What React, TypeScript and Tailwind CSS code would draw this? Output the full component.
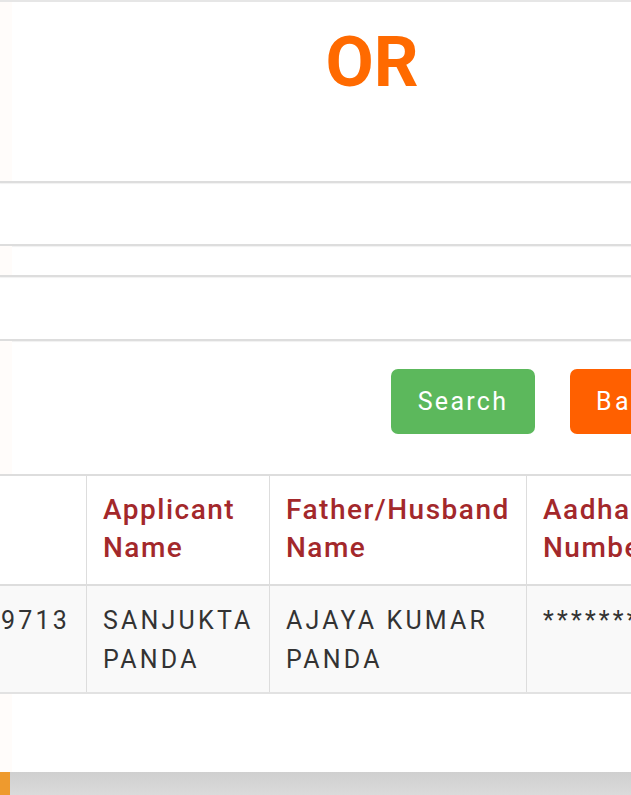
import React from 'react';

const font = { fontFamily: 'Roboto, "Noto Sans", Arial, sans-serif' };

function Divider() {
  return <div className="h-[2px] bg-[#dddddd] shadow-[0_1px_1px_rgba(0,0,0,0.06)]" />;
}

export default function App() {
  return (
    <div className="w-[631px] h-[795px] overflow-hidden bg-white relative" style={font}>
      <div className="w-[744px]">
        <div className="h-[2px] bg-[#e6e6e6]" />
        {/* OR panel */}
        <div className="h-[179px] flex">
          <div className="w-3 bg-[#fffcfa]" />
          <div className="flex-1 flex justify-center pt-[20px] pr-[12px]">
            <span className="text-[70px] leading-[80px] font-bold text-[#ff6a00]">OR</span>
          </div>
        </div>
        <Divider />
        <div className="h-[61px]" />
        <Divider />
        <div className="h-[29px] flex">
          <div className="w-3 bg-[#fffcfa]" />
        </div>
        <Divider />
        <div className="h-[62px]" />
        <Divider />
        {/* buttons */}
        <div className="h-[133px] flex">
          <div className="w-3 bg-[#fffcfa]" />
          <div className="flex-1 flex items-start pt-[28px] pl-[379px] gap-[35px]">
            <button className="w-[144px] h-[65px] rounded-[7px] bg-[#5cb85c] text-white text-[25px] tracking-[2.3px]">
              Search
            </button>
            <button className="w-[120px] h-[65px] rounded-[7px] bg-[#ff6000] text-white text-[25px] tracking-[3.5px] text-left pl-[26px]">
              Back
            </button>
          </div>
        </div>
        {/* table */}
        <div className="border-t-2 border-[#dddddd]">
          <div className="flex h-[108px] bg-white text-[#a3282b] text-[28px] leading-[38px] font-medium tracking-[1.5px]">
            <div className="w-[87px] border-r border-[#dddddd]" />
            <div className="w-[183px] border-r border-[#dddddd] pl-[16px] pt-[15px]">
              Applicant<br />Name
            </div>
            <div className="w-[257px] border-r border-[#dddddd] pl-[16px] pt-[15px] whitespace-nowrap">
              Father/Husband<br />Name
            </div>
            <div className="w-[200px] border-r border-[#dddddd] pl-[16px] pt-[15px]">
              Aadhaar<br />Number
            </div>
          </div>
          <div className="border-t-2 border-[#dddddd]" />
          <div className="flex h-[108px] bg-[#f9f9f9] text-[#333333] text-[25px] leading-[39px] tracking-[3.2px] border-b-2 border-[#e2e2e2]">
            <div className="w-[87px] border-r border-[#dddddd] pt-[15px] flex justify-end pr-[16px] overflow-hidden whitespace-nowrap">
              219713
            </div>
            <div className="w-[183px] border-r border-[#dddddd] pl-[16px] pt-[15px] whitespace-nowrap">
              SANJUKTA<br />PANDA
            </div>
            <div className="w-[257px] border-r border-[#dddddd] pl-[16px] pt-[15px] whitespace-nowrap">
              AJAYA KUMAR<br />PANDA
            </div>
            <div className="w-[200px] border-r border-[#dddddd] pl-[16px] pt-[15px] whitespace-nowrap">
              ********9713
            </div>
          </div>
        </div>
        <div className="h-[78px] flex">
          <div className="w-3 bg-[#fffcfa]" />
        </div>
        <div className="h-[30px] flex bg-gradient-to-b from-[#cfcfcf] to-[#dedede]">
          <div className="w-[10px] bg-[#ee9a2e]" />
        </div>
      </div>
    </div>
  );
}
